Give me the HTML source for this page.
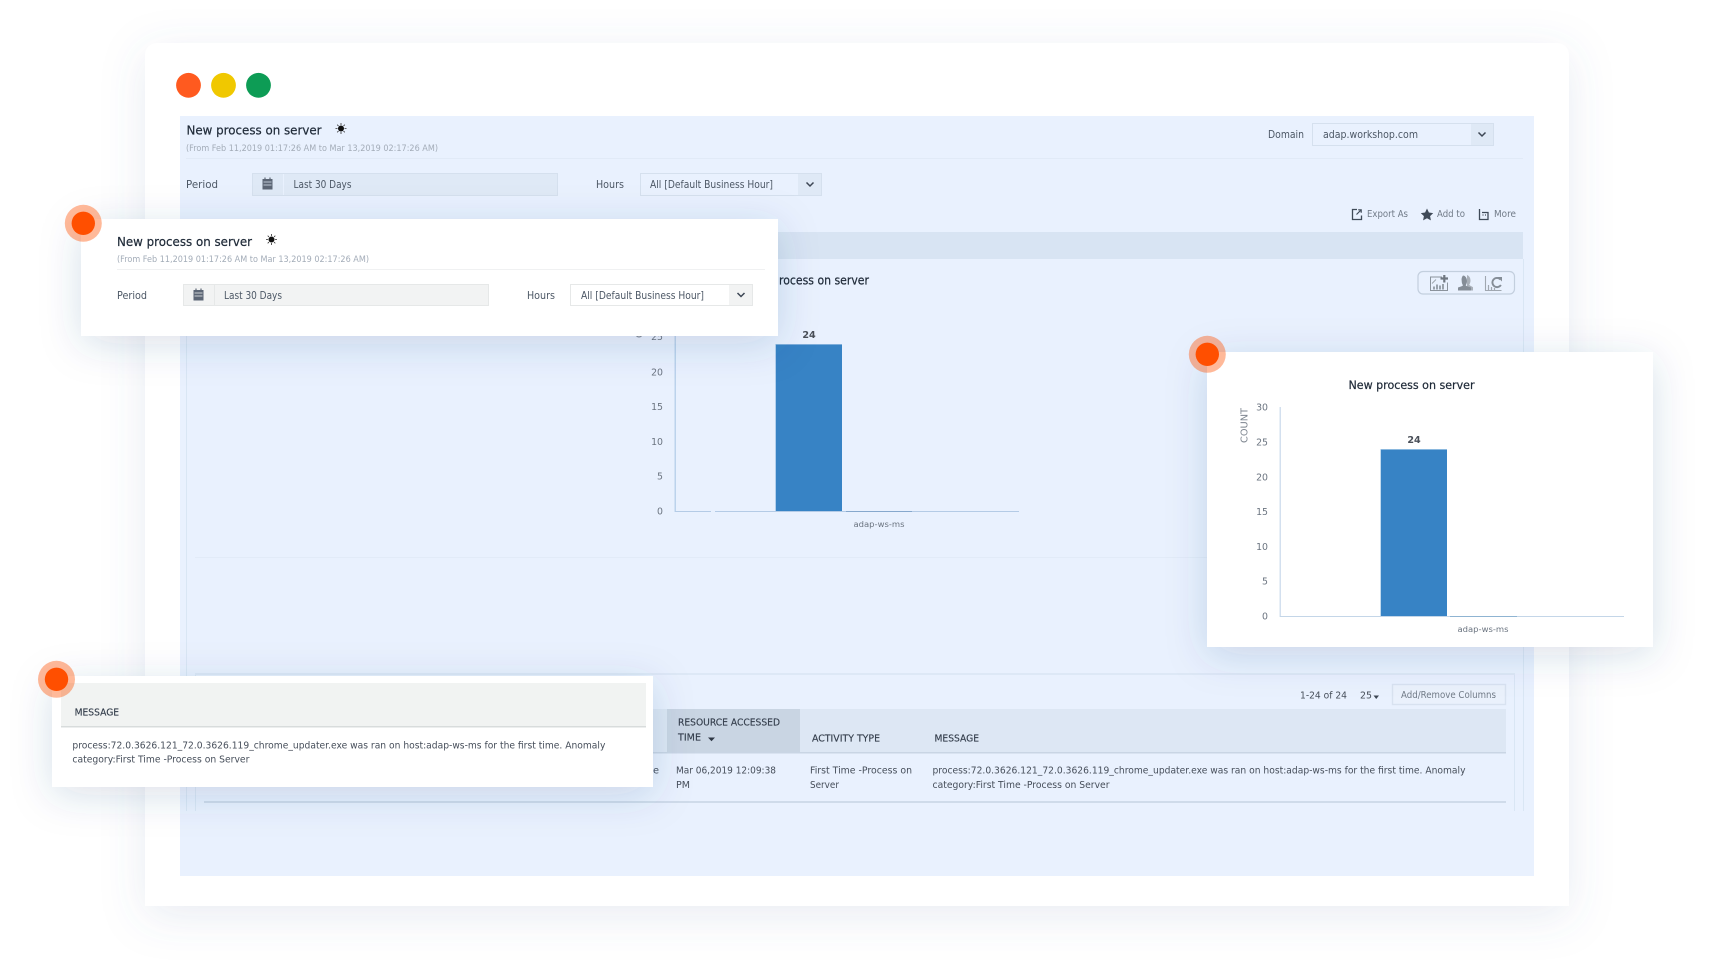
<!DOCTYPE html>
<html><head><meta charset="utf-8"><title>New process on server</title>
<style>
html,body{margin:0;padding:0;background:#fff;width:1709px;height:971px;overflow:hidden}
svg{display:block}
text{font-family:"DejaVu Sans","Liberation Sans",sans-serif;fill:#5a6470;font-size:10.2px;}
.b{fill:#1f2a38;font-size:12.5px;stroke:#1f2a38;stroke-width:.22px}
.s{fill:#a3acb8;font-size:8.6px}
.l{fill:#4d5866;font-size:10.2px}
.h{fill:#333d4b;font-size:9.6px;stroke:#333d4b;stroke-width:.15px}
.tb{fill:#717b88;font-size:9.4px}
.a{fill:#6b7480;font-size:9.4px;text-anchor:end}
.v{fill:#4a4f58;font-size:9.6px;font-weight:bold;text-anchor:middle}
.x{fill:#6b7480;font-size:8.2px;text-anchor:middle}
.m{fill:#464e5a;font-size:9.8px}
.c{fill:#7d858f;font-size:10px;text-anchor:middle}
.soft{filter:blur(.28px)}
</style></head>
<body>
<svg width="1709" height="971" viewBox="0 0 1709 971" xmlns="http://www.w3.org/2000/svg">
<defs>
<filter id="card" x="-10%" y="-15%" width="120%" height="130%"><feDropShadow dx="0" dy="10" stdDeviation="22" flood-color="#52689a" flood-opacity=".13"/></filter>
<filter id="pop" x="-25%" y="-60%" width="150%" height="220%"><feDropShadow dx="0" dy="8" stdDeviation="20" flood-color="#33507f" flood-opacity=".17"/></filter>
</defs>

<!-- main card -->
<path d="M157 43H1557a12 12 0 0 1 12 12V906H145V55a12 12 0 0 1 12-12z" fill="#fff" filter="url(#card)"/>
<circle cx="188.500" cy="85.300" r="12.400" fill="#ff5a1f"/>
<circle cx="223.500" cy="85.300" r="12.400" fill="#f0c800"/>
<circle cx="258.500" cy="85.300" r="12.400" fill="#0d9c55"/>

<!-- blue panel -->
<rect x="180" y="116" width="1354" height="760" fill="#e9f1fe"/>
<g class="soft">
<text class="b" x="186.500" y="134.500" textLength="135" lengthAdjust="spacingAndGlyphs">New process on server</text>
<g fill="#111"><circle cx="341" cy="128.500" r="3"/><path d="M341 123v2M341 132v2M335.500 128.500h2M344.500 128.500h2M337.200 124.700l1.300 1.300M343.500 131l1.300 1.300M344.800 124.700l-1.300 1.300M338.500 131l-1.300 1.300" stroke="#333" stroke-width=".8"/></g>
<text class="s" x="186" y="151" textLength="252" lengthAdjust="spacingAndGlyphs">(From Feb 11,2019 01:17:26 AM to Mar 13,2019 02:17:26 AM)</text>
<rect x="186" y="158" width="1337" height="1" fill="#e1eaf7"/>
<text class="l" x="186" y="188" textLength="32" lengthAdjust="spacingAndGlyphs">Period</text>
<rect x="252.500" y="173.500" width="305" height="22" fill="#dfe9f6" stroke="#d5e0ee"/>
<rect x="283" y="174" width="1" height="21" fill="#e9f1fe"/>
<path d="M262.500 179h10v10.500h-10z" fill="#5c6675"/><path d="M263.500 182h8M263.500 185h8" stroke="#dde7f4" stroke-width=".8"/><path d="M265 177.500v2M270 177.500v2" stroke="#5c6675" stroke-width="1.200"/>
<text class="l" x="293.500" y="188" textLength="58" lengthAdjust="spacingAndGlyphs">Last 30 Days</text>
<text class="l" x="596" y="188" textLength="28" lengthAdjust="spacingAndGlyphs">Hours</text>
<rect x="640.500" y="173.500" width="181" height="22" fill="#e9f1fe" stroke="#d5e0ee"/>
<rect x="798" y="174" width="23" height="21" fill="#dfe9f6"/>
<path d="M806.500 182.500l3.500 3.500 3.500-3.500" fill="none" stroke="#3d4654" stroke-width="1.500"/>
<text class="l" x="650" y="188" textLength="123" lengthAdjust="spacingAndGlyphs">All [Default Business Hour]</text>

<text class="l" x="1268" y="138" textLength="36" lengthAdjust="spacingAndGlyphs">Domain</text>
<rect x="1312.500" y="123.500" width="181" height="22" fill="#e9f1fe" stroke="#d5e0ee"/>
<rect x="1471" y="124" width="22" height="21" fill="#dfe9f6"/>
<path d="M1478.500 132.500l3.500 3.500 3.500-3.500" fill="none" stroke="#3d4654" stroke-width="1.500"/>
<text class="l" x="1323" y="138" textLength="95" lengthAdjust="spacingAndGlyphs">adap.workshop.com</text>

<!-- toolbar -->
<path d="M1357 209.500h-4.500v10h9v-4" fill="none" stroke="#3f4a58" stroke-width="1.300"/><path d="M1356.500 214.500l4-4M1358.200 209.800h3v3" fill="none" stroke="#3f4a58" stroke-width="1.200"/>
<text class="tb" x="1367" y="217" textLength="41" lengthAdjust="spacingAndGlyphs">Export As</text>
<path d="M1427 208.500l1.900 4 4.300.6-3.100 3 .8 4.300-3.900-2.100-3.900 2.100.8-4.300-3.100-3 4.300-.6z" fill="#3f4a58"/>
<text class="tb" x="1437" y="217" textLength="28" lengthAdjust="spacingAndGlyphs">Add to</text>
<path d="M1479.500 209v10.500h8.500v-7h-6" fill="none" stroke="#3f4a58" stroke-width="1.300"/><path d="M1482.500 215h1M1485 215h1" stroke="#3f4a58" stroke-width="1.300"/>
<text class="tb" x="1494" y="217" textLength="22" lengthAdjust="spacingAndGlyphs">More</text>
</g>

<!-- report frame -->
<rect x="186" y="232" width="1337" height="27" fill="#d8e4f3"/>
<rect x="186" y="259" width="1" height="552" fill="#d9e6f4"/>
<rect x="1523" y="259" width="1" height="552" fill="#d9e6f4"/>
<rect x="195" y="674" width="1" height="137" fill="#d9e6f4"/>
<rect x="1514" y="674" width="1" height="137" fill="#d9e6f4"/>
<rect x="195" y="673" width="1320" height="2" fill="#dde8f6"/>
<rect x="195" y="557" width="1319" height="1" fill="#e2ebf8"/>
<g class="soft">
<text class="b" x="779" y="284.500" textLength="90" lengthAdjust="spacingAndGlyphs">rocess on server</text>
<!-- chart buttons -->
<rect x="1418" y="271.500" width="96.500" height="22.500" rx="5" fill="#e9f1fe" stroke="#c3cfde" stroke-width="1.200"/>
<path d="M1442 277h-11.500v13.500h17v-8" fill="none" stroke="#8b939c" stroke-width="1"/>
<path d="M1432 283.500l4-4" stroke="#9aa2ab" stroke-width=".9"/>
<path d="M1434 289.500v-3M1437 289.500v-5M1440 289.500v-4M1443 289.500v-5.500" stroke="#7f8791" stroke-width="1.500"/>
<path d="M1440.500 278.500h7.500M1444.300 275v7.500" stroke="#6f7781" stroke-width="2.200"/>
<path d="M1467 275a4.500 5.500 0 0 1 3.500 5.500c0 2-.7 3.300-1.300 4.400 .9 1 2.800 1.500 3.800 2.300v3.300h-6z" fill="#a9b0b9"/>
<path d="M1463 275.500a4 5.500 0 0 1 4 5.500c0 2-.6 3.300-1.300 4.200 .7 1.200 3.300 1.300 5.300 2.300v3h-13v-3c2-1 4.300-1.100 5-2.300-.7-.9-1.300-2.200-1.300-4.200a4 5.500 0 0 1 1.300-5.500z" fill="#858d97"/>
<path d="M1485.500 276v14.500h16" fill="none" stroke="#a0a7b0" stroke-width="1.100"/>
<path d="M1488.500 290v-5M1491.500 290v-3M1494.500 290v-2" stroke="#a0a7b0" stroke-width="1.200"/>
<path d="M1500.500 279.500a4.600 4.600 0 1 0 .4 5.500" fill="none" stroke="#858d97" stroke-width="1.900"/><path d="M1497.500 277h4.500v4.500z" fill="#858d97"/>

<!-- main chart -->
<text class="c" transform="translate(642.500 320.500) rotate(-90)" textLength="35" lengthAdjust="spacingAndGlyphs">COUNT</text>
<text class="a" x="663" y="340">25</text><text class="a" x="663" y="375.500">20</text><text class="a" x="663" y="410">15</text><text class="a" x="663" y="445">10</text><text class="a" x="663" y="479.500">5</text><text class="a" x="663" y="514.500">0</text>
<text class="v" x="809" y="338">24</text>
<text class="x" x="879" y="527" textLength="51" lengthAdjust="spacingAndGlyphs">adap-ws-ms</text>
</g>
<rect x="674.500" y="300" width="1.500" height="212" fill="#bcd3ec"/>
<rect x="675" y="511" width="36" height="1" fill="#b4cbe6"/>
<rect x="715" y="511" width="304" height="1" fill="#b4cbe6"/>
<rect x="846" y="511" width="66" height="1" fill="#86a8cd"/>
<rect x="775.700" y="344.300" width="66.300" height="166.700" fill="#3783c5"/>
<rect x="775.700" y="344" width="66.300" height="1" fill="#7eaedb"/>

<!-- table -->
<g class="soft">
<text class="m" x="1300" y="698.500" textLength="47" lengthAdjust="spacingAndGlyphs">1-24 of 24</text>
<text class="m" x="1360" y="698.500" textLength="12" lengthAdjust="spacingAndGlyphs">25</text>
<path d="M1373.500 695.500h5.500l-2.750 3.500z" fill="#3c4654"/>
<rect x="1392.500" y="684.500" width="113" height="20" fill="#eaf1fc" stroke="#d8e2f0" stroke-width="1.400"/>
<text class="tb" x="1401" y="698" textLength="95" lengthAdjust="spacingAndGlyphs">Add/Remove Columns</text>
</g>
<rect x="205" y="709" width="1301" height="43" fill="#dde7f4"/>
<rect x="667" y="709" width="133" height="43" fill="#c9d5e3"/>
<rect x="205" y="752" width="1301" height="1.500" fill="#c9d5e4"/>
<rect x="204" y="801" width="1302" height="2" fill="#cfdbea"/>
<g class="soft">
<text class="h" x="678" y="725.500" textLength="102" lengthAdjust="spacingAndGlyphs">RESOURCE ACCESSED</text>
<text class="h" x="678" y="740.500" textLength="23" lengthAdjust="spacingAndGlyphs">TIME</text>
<path d="M708 737.500h7l-3.500 3.700z" fill="#2e3744"/>
<text class="h" x="812" y="741.500" textLength="68" lengthAdjust="spacingAndGlyphs">ACTIVITY TYPE</text>
<text class="h" x="934.500" y="741.500" textLength="44.500" lengthAdjust="spacingAndGlyphs">MESSAGE</text>
<text class="m" x="653" y="773.500">e</text>
<text class="m" x="676" y="773.500" textLength="100" lengthAdjust="spacingAndGlyphs">Mar 06,2019 12:09:38</text>
<text class="m" x="676" y="788" textLength="14" lengthAdjust="spacingAndGlyphs">PM</text>
<text class="m" x="810" y="773.500" textLength="102" lengthAdjust="spacingAndGlyphs">First Time -Process on</text>
<text class="m" x="810" y="788" textLength="29" lengthAdjust="spacingAndGlyphs">Server</text>
<text class="m" x="932.500" y="773.500" textLength="533" lengthAdjust="spacingAndGlyphs">process:72.0.3626.121_72.0.3626.119_chrome_updater.exe was ran on host:adap-ws-ms for the first time. Anomaly</text>
<text class="m" x="932.500" y="788" textLength="177" lengthAdjust="spacingAndGlyphs">category:First Time -Process on Server</text>
</g>

<!-- popup 1 -->
<rect x="81" y="219" width="697" height="117" fill="#fff" filter="url(#pop)"/>
<g class="soft">
<text class="b" x="117" y="246" textLength="135" lengthAdjust="spacingAndGlyphs">New process on server</text>
<g fill="#111"><circle cx="271.500" cy="239.500" r="3"/><path d="M271.500 234v2M271.500 243v2M266 239.500h2M275 239.500h2M267.700 235.700l1.300 1.300M274 242l1.300 1.300M275.300 235.700l-1.300 1.300M269 242l-1.300 1.300" stroke="#333" stroke-width=".8"/></g>
<text class="s" x="117" y="262" textLength="252" lengthAdjust="spacingAndGlyphs">(From Feb 11,2019 01:17:26 AM to Mar 13,2019 02:17:26 AM)</text>
<rect x="117" y="269" width="648" height="1" fill="#f0f1f2"/>
<text class="l" x="117" y="299" textLength="30" lengthAdjust="spacingAndGlyphs">Period</text>
<rect x="183.500" y="284.500" width="305" height="21" fill="#f2f3f3" stroke="#e6e8e8"/>
<rect x="214" y="285" width="1" height="20" fill="#e6e8e8"/>
<path d="M193.500 290h10v10.500h-10z" fill="#5c6675"/><path d="M194.500 293h8M194.500 296h8" stroke="#f2f3f3" stroke-width=".8"/><path d="M196 288.500v2M201 288.500v2" stroke="#5c6675" stroke-width="1.200"/>
<text class="l" x="224" y="299" textLength="58" lengthAdjust="spacingAndGlyphs">Last 30 Days</text>
<text class="l" x="527" y="299" textLength="28" lengthAdjust="spacingAndGlyphs">Hours</text>
<rect x="570.500" y="284.500" width="182" height="21" fill="#fff" stroke="#e6e8e8"/>
<rect x="729" y="285" width="23" height="20" fill="#f2f3f3"/>
<path d="M737.500 293l3.500 3.500 3.500-3.500" fill="none" stroke="#3d4654" stroke-width="1.500"/>
<text class="l" x="581" y="299" textLength="123" lengthAdjust="spacingAndGlyphs">All [Default Business Hour]</text>
</g>
<circle cx="83.300" cy="223.300" r="18.500" fill="#ff4f00" opacity=".4"/>
<circle cx="83.300" cy="223.300" r="11.700" fill="#ff4f00"/>

<!-- popup 2 -->
<rect x="1207" y="352" width="446" height="295" fill="#fff" filter="url(#pop)"/>
<g class="soft">
<text class="b" x="1348.500" y="389" textLength="126" lengthAdjust="spacingAndGlyphs" style="font-size:11.800px">New process on server</text>
<text class="c" transform="translate(1247.500 425.500) rotate(-90)" textLength="35" lengthAdjust="spacingAndGlyphs">COUNT</text>
<text class="a" x="1268" y="410.500">30</text><text class="a" x="1268" y="445.500">25</text><text class="a" x="1268" y="480.500">20</text><text class="a" x="1268" y="515">15</text><text class="a" x="1268" y="550">10</text><text class="a" x="1268" y="584.500">5</text><text class="a" x="1268" y="619.500">0</text>
<text class="v" x="1414" y="443">24</text>
<text class="x" x="1483" y="632" textLength="51" lengthAdjust="spacingAndGlyphs">adap-ws-ms</text>
</g>
<rect x="1279.500" y="407" width="1.500" height="210" fill="#d3e0ef"/>
<rect x="1280" y="616" width="344" height="1" fill="#c4d6e8"/>
<rect x="1450" y="616" width="67" height="1" fill="#8fb4d2"/>
<rect x="1380.700" y="449.300" width="66.300" height="166.700" fill="#3783c5"/>
<rect x="1380.700" y="449" width="66.300" height="1" fill="#8ab8de"/>
<circle cx="1207.300" cy="354.300" r="18.500" fill="#ff4f00" opacity=".4"/>
<circle cx="1207.300" cy="354.300" r="11.700" fill="#ff4f00"/>

<!-- popup 3 -->
<rect x="52" y="676" width="601" height="111" fill="#fff" filter="url(#pop)"/>
<rect x="61" y="683" width="585" height="43" fill="#f1f3f2"/>
<rect x="61" y="726" width="585" height="1.500" fill="#d8dcdc"/>
<g class="soft">
<text class="h" x="74.600" y="715.500" textLength="44.500" lengthAdjust="spacingAndGlyphs">MESSAGE</text>
<text class="m" x="72.400" y="748.500" textLength="533" lengthAdjust="spacingAndGlyphs">process:72.0.3626.121_72.0.3626.119_chrome_updater.exe was ran on host:adap-ws-ms for the first time. Anomaly</text>
<text class="m" x="72.400" y="762.500" textLength="177" lengthAdjust="spacingAndGlyphs">category:First Time -Process on Server</text>
</g>
<circle cx="56.500" cy="679.300" r="18.500" fill="#ff4f00" opacity=".4"/>
<circle cx="56.500" cy="679.300" r="11.700" fill="#ff4f00"/>
</svg>
</body></html>
